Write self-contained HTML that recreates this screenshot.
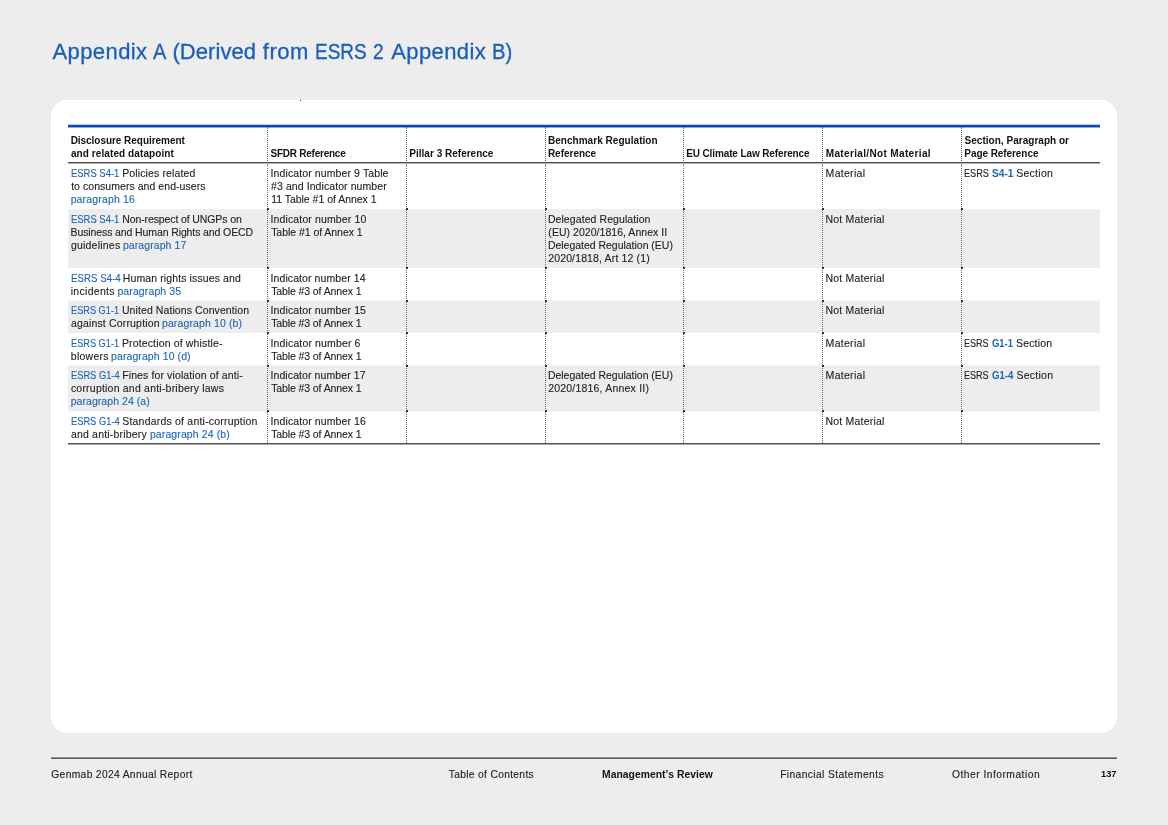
<!DOCTYPE html>
<html><head><meta charset="utf-8">
<style>
html,body{margin:0;padding:0;}
body{width:1168px;height:825px;background:#ededed;position:relative;overflow:hidden;font-family:"Liberation Sans",sans-serif;}
.s{position:absolute;white-space:pre;line-height:1;transform-origin:0 0;}
.n{font-size:10.5px;color:#222;-webkit-text-stroke:0.12px #222;}.b{font-size:10.5px;color:#1f63b5;-webkit-text-stroke:0.12px #1f63b5;}.bb{font-size:10px;font-weight:bold;color:#1f63b5;}.h{font-size:10px;font-weight:bold;color:#111;}.f{font-size:10.3px;color:#222;-webkit-text-stroke:0.12px #222;}.fb{font-size:10.3px;font-weight:bold;color:#111;}.pg{font-size:9px;font-weight:bold;color:#111;}.t{font-size:22px;color:#1a5eb8;-webkit-text-stroke:0.3px #1a5eb8;}.e{font-size:10px;color:#1f63b5;-webkit-text-stroke:0.12px #1f63b5;}.ne{font-size:10px;color:#222;-webkit-text-stroke:0.12px #222;}
.card{position:absolute;left:51px;top:100px;width:1066px;height:633px;background:#fff;border-radius:16px;}
.r{position:absolute;left:68px;width:1032px;}
.g{background:#ededed;}
.m{position:absolute;width:2px;height:2px;background:#333;}
.vl{position:absolute;top:127px;width:0;height:316px;border-left:1px dotted #666;}
</style></head><body>
<div class="card"></div>
<div class="r g" style="top:209px;height:59px"></div>
<div class="r" style="top:300px;height:1px;background:#f5f5f5"></div>
<div class="r g" style="top:301px;height:32px"></div>
<div class="r" style="top:365px;height:1px;background:#f6f6f6"></div>
<div class="r g" style="top:366px;height:45px"></div>
<div class="r" style="top:411px;height:1px;background:#f8f8f8"></div>
<div class="r ln" style="top:124px;height:1px;background:#b3d3f3"></div>
<div class="r ln" style="top:125px;height:2px;background:#0d4b9f"></div>
<div class="r ln" style="top:127px;height:1px;background:#86abe8"></div>
<div class="r ln" style="top:162px;height:1px;background:#4a4a4a"></div>
<div class="r ln" style="top:163px;height:1px;background:#b5b0ba"></div>
<div class="r ln" style="top:443px;height:1px;background:#555"></div>
<div class="r ln" style="top:444px;height:1px;background:#a5a5a5"></div>
<div class="vl" style="left:267px"></div>
<div class="vl" style="left:406px"></div>
<div class="vl" style="left:545px"></div>
<div class="vl" style="left:683px"></div>
<div class="vl" style="left:822px"></div>
<div class="vl" style="left:961px"></div>
<div style="position:absolute;left:51px;top:757px;width:1066px;height:1px;background:#959595"></div>
<div style="position:absolute;left:51px;top:758px;width:1066px;height:1px;background:#5a5a5a"></div>
<div style="position:absolute;left:300px;top:100px;width:1px;height:1px;background:#444"></div>
<i class="m" style="left:267px;top:208px"></i><i class="m" style="left:267px;top:267px"></i><i class="m" style="left:267px;top:300px"></i><i class="m" style="left:267px;top:332px"></i><i class="m" style="left:267px;top:365px"></i><i class="m" style="left:267px;top:410px"></i><i class="m" style="left:406px;top:208px"></i><i class="m" style="left:406px;top:267px"></i><i class="m" style="left:406px;top:300px"></i><i class="m" style="left:406px;top:332px"></i><i class="m" style="left:406px;top:365px"></i><i class="m" style="left:406px;top:410px"></i><i class="m" style="left:545px;top:208px"></i><i class="m" style="left:545px;top:267px"></i><i class="m" style="left:545px;top:300px"></i><i class="m" style="left:545px;top:332px"></i><i class="m" style="left:545px;top:365px"></i><i class="m" style="left:545px;top:410px"></i><i class="m" style="left:683px;top:208px"></i><i class="m" style="left:683px;top:267px"></i><i class="m" style="left:683px;top:300px"></i><i class="m" style="left:683px;top:332px"></i><i class="m" style="left:683px;top:365px"></i><i class="m" style="left:683px;top:410px"></i><i class="m" style="left:822px;top:208px"></i><i class="m" style="left:822px;top:267px"></i><i class="m" style="left:822px;top:300px"></i><i class="m" style="left:822px;top:332px"></i><i class="m" style="left:822px;top:365px"></i><i class="m" style="left:822px;top:410px"></i><i class="m" style="left:961px;top:208px"></i><i class="m" style="left:961px;top:267px"></i><i class="m" style="left:961px;top:300px"></i><i class="m" style="left:961px;top:332px"></i><i class="m" style="left:961px;top:365px"></i><i class="m" style="left:961px;top:410px"></i>
<div id="tx" style="position:absolute;left:0;top:0;width:1168px;height:825px;will-change:transform">
<span class="s e" style="left:70.98px;top:168.53px;transform:scaleX(0.9452)">ESRS S4-1</span>
<span class="s n" style="left:122.15px;top:168.11px;letter-spacing:0.13px">Policies related</span>
<span class="s n" style="left:71.13px;top:181.11px;letter-spacing:0.05px">to consumers and end-users</span>
<span class="s b" style="left:70.63px;top:194.11px;letter-spacing:0.16px">paragraph 16</span>
<span class="s e" style="left:70.6px;top:214.53px;transform:scaleX(0.9451)">ESRS S4-1</span>
<span class="s n" style="left:122.24px;top:214.11px;letter-spacing:-0.11px">Non-respect of UNGPs on</span>
<span class="s n" style="left:70.56px;top:227.11px;letter-spacing:-0.11px">Business and Human Rights and OECD</span>
<span class="s n" style="left:70.9px;top:240.11px;letter-spacing:0.22px">guidelines</span>
<span class="s b" style="left:122.96px;top:240.11px;letter-spacing:0.08px">paragraph 17</span>
<span class="s e" style="left:70.94px;top:273.54px;transform:scaleX(0.9715)">ESRS S4-4</span>
<span class="s n" style="left:122.83px;top:273.11px;letter-spacing:0.11px">Human rights issues and</span>
<span class="s n" style="left:70.75px;top:286.11px;letter-spacing:0.29px">incidents</span>
<span class="s b" style="left:117.38px;top:286.11px;letter-spacing:0.12px">paragraph 35</span>
<span class="s e" style="left:70.89px;top:305.54px;transform:scaleX(0.9202)">ESRS G1-1</span>
<span class="s n" style="left:121.93px;top:305.11px;letter-spacing:0.09px">United Nations Convention</span>
<span class="s n" style="left:70.89px;top:318.11px;letter-spacing:0.17px">against Corruption</span>
<span class="s b" style="left:161.96px;top:318.11px;letter-spacing:0.12px">paragraph 10 (b)</span>
<span class="s e" style="left:70.89px;top:338.54px;transform:scaleX(0.9202)">ESRS G1-1</span>
<span class="s n" style="left:121.88px;top:338.11px;letter-spacing:0.15px">Protection of whistle-</span>
<span class="s n" style="left:70.77px;top:351.11px;letter-spacing:0.27px">blowers</span>
<span class="s b" style="left:111.04px;top:351.11px;letter-spacing:0.09px">paragraph 10 (d)</span>
<span class="s e" style="left:70.63px;top:370.54px;transform:scaleX(0.9300)">ESRS G1-4</span>
<span class="s n" style="left:122.15px;top:370.11px;letter-spacing:0.12px">Fines for violation of anti-</span>
<span class="s n" style="left:70.91px;top:383.11px;letter-spacing:0.21px">corruption and anti-bribery laws</span>
<span class="s b" style="left:70.65px;top:396.11px;letter-spacing:0.06px">paragraph 24 (a)</span>
<span class="s e" style="left:70.95px;top:416.54px;transform:scaleX(0.9300)">ESRS G1-4</span>
<span class="s n" style="left:122.2px;top:416.11px;letter-spacing:0.21px">Standards of anti-corruption</span>
<span class="s n" style="left:70.92px;top:429.11px;letter-spacing:0.19px">and anti-bribery</span>
<span class="s b" style="left:149.89px;top:429.11px;letter-spacing:0.11px">paragraph 24 (b)</span>
<span class="s n" style="left:270.52px;top:168.11px;letter-spacing:0.11px">Indicator number 9 Table</span>
<span class="s n" style="left:271.09px;top:181.11px;letter-spacing:0.08px">#3 and Indicator number</span>
<span class="s n" style="left:271.13px;top:194.11px;letter-spacing:-0.02px">11 Table #1 of Annex 1</span>
<span class="s n" style="left:270.54px;top:214.11px;letter-spacing:0.13px">Indicator number 10</span>
<span class="s n" style="left:271.14px;top:227.11px;letter-spacing:-0.04px">Table #1 of Annex 1</span>
<span class="s n" style="left:270.52px;top:273.11px;letter-spacing:0.09px">Indicator number 14</span>
<span class="s n" style="left:271.16px;top:286.11px;letter-spacing:-0.1px">Table #3 of Annex 1</span>
<span class="s n" style="left:270.57px;top:305.11px;letter-spacing:0.11px">Indicator number 15</span>
<span class="s n" style="left:271.16px;top:318.11px;letter-spacing:-0.1px">Table #3 of Annex 1</span>
<span class="s n" style="left:270.52px;top:338.11px;letter-spacing:0.14px">Indicator number 6</span>
<span class="s n" style="left:271.16px;top:351.11px;letter-spacing:-0.1px">Table #3 of Annex 1</span>
<span class="s n" style="left:270.51px;top:370.11px;letter-spacing:0.09px">Indicator number 17</span>
<span class="s n" style="left:271.16px;top:383.11px;letter-spacing:-0.1px">Table #3 of Annex 1</span>
<span class="s n" style="left:270.52px;top:416.11px;letter-spacing:0.11px">Indicator number 16</span>
<span class="s n" style="left:271.16px;top:429.11px;letter-spacing:-0.1px">Table #3 of Annex 1</span>
<span class="s n" style="left:547.88px;top:214.11px;letter-spacing:0.08px">Delegated Regulation</span>
<span class="s n" style="left:548.35px;top:227.11px;letter-spacing:0.04px">(EU) 2020/1816, Annex II</span>
<span class="s n" style="left:547.88px;top:240.11px;letter-spacing:-0.02px">Delegated Regulation (EU)</span>
<span class="s n" style="left:548.19px;top:253.11px;letter-spacing:0.14px">2020/1818, Art 12 (1)</span>
<span class="s n" style="left:547.88px;top:370.11px;letter-spacing:-0.02px">Delegated Regulation (EU)</span>
<span class="s n" style="left:548.19px;top:383.11px;letter-spacing:0.2px">2020/1816, Annex II)</span>
<span class="s n" style="left:825.61px;top:168.11px;letter-spacing:0.29px">Material</span>
<span class="s n" style="left:825.55px;top:214.11px;letter-spacing:0.2px">Not Material</span>
<span class="s n" style="left:825.56px;top:273.11px;letter-spacing:0.2px">Not Material</span>
<span class="s n" style="left:825.55px;top:305.11px;letter-spacing:0.2px">Not Material</span>
<span class="s n" style="left:825.61px;top:338.11px;letter-spacing:0.29px">Material</span>
<span class="s n" style="left:825.61px;top:370.11px;letter-spacing:0.29px">Material</span>
<span class="s n" style="left:825.56px;top:416.11px;letter-spacing:0.2px">Not Material</span>
<span class="s ne" style="left:963.99px;top:168.53px;transform:scaleX(0.9140)">ESRS</span>
<span class="s bb" style="left:991.57px;top:168.53px;transform:scaleX(1.0153)">S4-1</span>
<span class="s n" style="left:1016.2px;top:168.11px;letter-spacing:0.28px">Section</span>
<span class="s ne" style="left:963.99px;top:338.54px;transform:scaleX(0.9036)">ESRS</span>
<span class="s bb" style="left:991.65px;top:338.54px;transform:scaleX(0.9416)">G1-1</span>
<span class="s n" style="left:1015.98px;top:338.11px;letter-spacing:0.18px">Section</span>
<span class="s ne" style="left:963.99px;top:370.54px;transform:scaleX(0.9037)">ESRS</span>
<span class="s bb" style="left:991.83px;top:370.54px;transform:scaleX(0.9643)">G1-4</span>
<span class="s n" style="left:1016.4px;top:370.11px;letter-spacing:0.26px">Section</span>
<span class="s h" style="left:70.65px;top:135.53px;letter-spacing:-0.04px">Disclosure Requirement</span>
<span class="s h" style="left:70.92px;top:148.53px;letter-spacing:0.09px">and related datapoint</span>
<span class="s h" style="left:270.5px;top:148.53px;letter-spacing:-0.24px">SFDR Reference</span>
<span class="s h" style="left:409.34px;top:148.53px;letter-spacing:0.01px">Pillar 3 Reference</span>
<span class="s h" style="left:547.93px;top:135.53px;letter-spacing:0.04px">Benchmark Regulation</span>
<span class="s h" style="left:547.93px;top:148.53px;letter-spacing:-0.02px">Reference</span>
<span class="s h" style="left:686.21px;top:148.53px;letter-spacing:-0.12px">EU Climate Law Reference</span>
<span class="s h" style="left:825.78px;top:148.53px;letter-spacing:0.35px">Material/Not Material</span>
<span class="s h" style="left:964.5px;top:135.53px;letter-spacing:0.03px">Section, Paragraph or</span>
<span class="s h" style="left:964.34px;top:148.53px;letter-spacing:-0.07px">Page Reference</span>
<span class="s f" style="left:51.28px;top:770.28px;letter-spacing:0.32px">Genmab 2024 Annual Report</span>
<span class="s f" style="left:448.77px;top:770.28px;letter-spacing:0.3px">Table of Contents</span>
<span class="s fb" style="left:601.99px;top:770.28px;letter-spacing:0.07px">Management’s Review</span>
<span class="s f" style="left:780.17px;top:770.28px;letter-spacing:0.38px">Financial Statements</span>
<span class="s f" style="left:951.98px;top:770.28px;letter-spacing:0.47px">Other Information</span>
<span class="s pg" style="left:1100.5px;top:770.38px;transform:scaleX(1.0261)">137</span>
<span class="s t" style="left:52.44px;top:41.38px;letter-spacing:0.42px">Appendix</span>
<span class="s t" style="left:152.81px;top:41.38px;transform:scaleX(0.9080)">A</span>
<span class="s t" style="left:172.49px;top:41.38px;letter-spacing:0.06px">(Derived</span>
<span class="s t" style="left:262.85px;top:41.38px;letter-spacing:0.46px">from</span>
<span class="s t" style="left:314.61px;top:41.38px;transform:scaleX(0.8637)">ESRS</span>
<span class="s t" style="left:373.3px;top:41.38px;transform:scaleX(0.8715)">2</span>
<span class="s t" style="left:391.16px;top:41.38px;letter-spacing:0.41px">Appendix</span>
<span class="s t" style="left:491.81px;top:41.38px;transform:scaleX(0.9229)">B)</span>
</div>
</body></html>
